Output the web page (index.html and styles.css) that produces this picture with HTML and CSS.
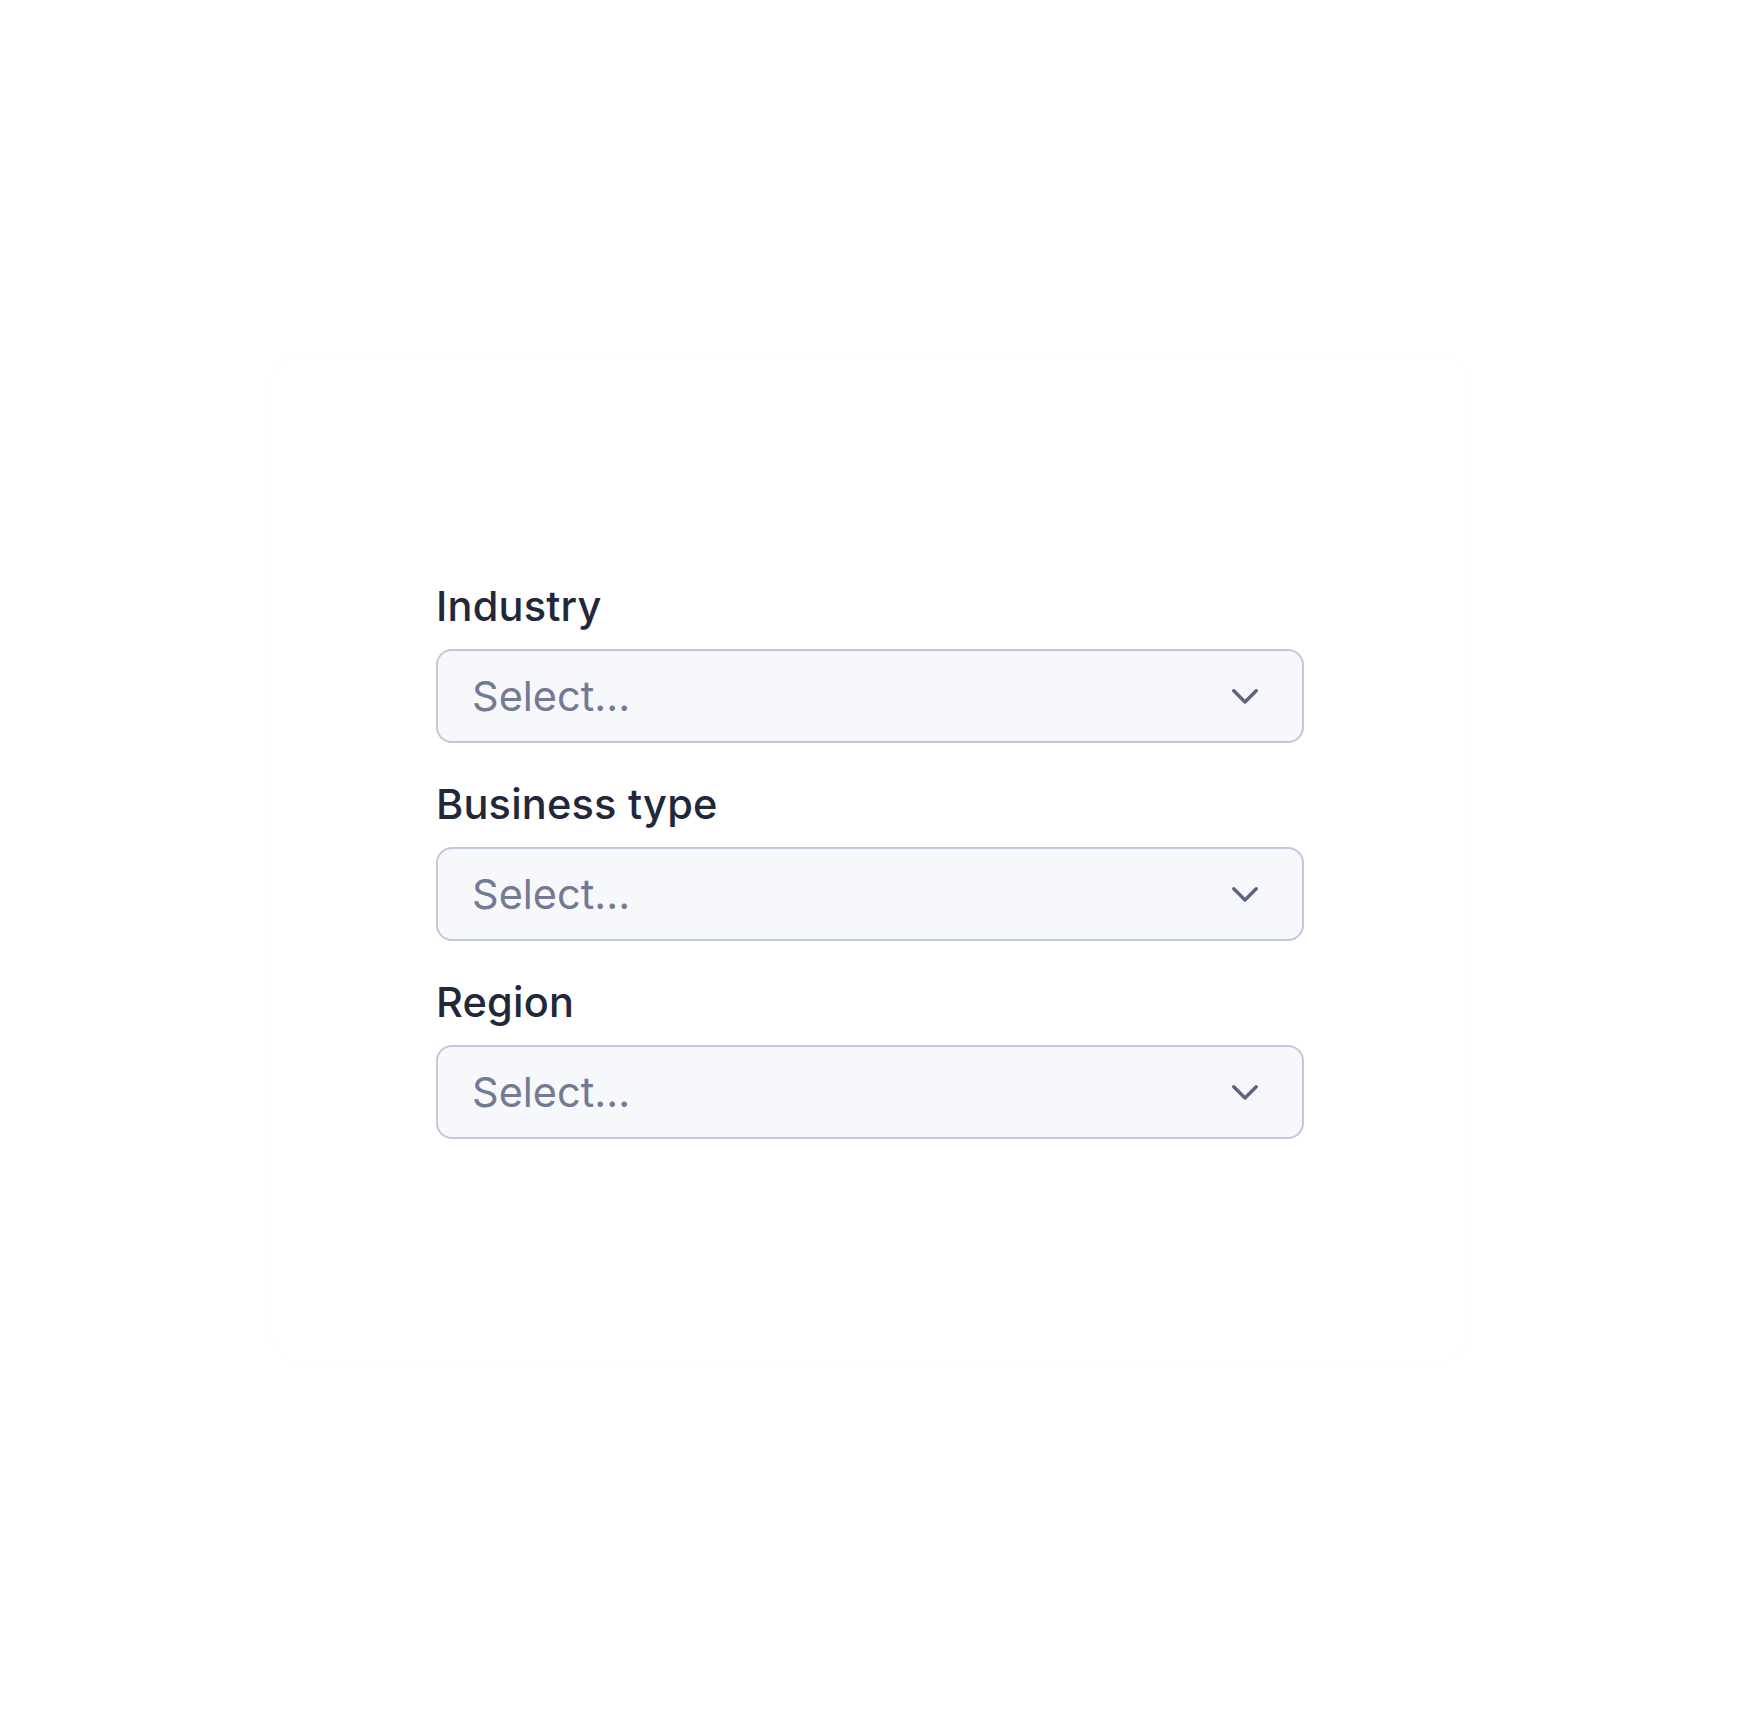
FILE: index.html
```html
<!DOCTYPE html>
<html lang="en">
<head>
    <meta charset="UTF-8">
    <meta name="viewport" content="width=device-width, initial-scale=1.0">
    <title>Company details</title>
    <link rel="stylesheet" href="styles.css">
</head>
<body>
    <div class="card">
        <div class="fields">
            <div class="field">
                <label class="field-label">Industry</label>
                <div class="select">
                    <span class="select-value">Select...</span>
                    <svg class="chevron" width="26" height="15" viewBox="0 0 26 15"><path d="M1.8 1.8 L13 13 L24.2 1.8"/></svg>
                </div>
            </div>
            <div class="field">
                <label class="field-label">Business type</label>
                <div class="select">
                    <span class="select-value">Select...</span>
                    <svg class="chevron" width="26" height="15" viewBox="0 0 26 15"><path d="M1.8 1.8 L13 13 L24.2 1.8"/></svg>
                </div>
            </div>
            <div class="field">
                <label class="field-label">Region</label>
                <div class="select">
                    <span class="select-value">Select...</span>
                    <svg class="chevron" width="26" height="15" viewBox="0 0 26 15"><path d="M1.8 1.8 L13 13 L24.2 1.8"/></svg>
                </div>
            </div>
        </div>
    </div>
</body>
</html>
```

FILE: styles.css
```css
html, body {
    margin: 0;
    height: 100%;
}
body {
    font-family: Inter, "Noto Sans", sans-serif;
    background: #ffffff;
    display: flex;
    align-items: center;
    justify-content: center;
}
.card {
    width: 1200px;
    height: 1010px;
    margin-top: -1px;
    box-sizing: border-box;
    border: 1px solid #fdfdfd;
    border-radius: 32px;
    display: flex;
    align-items: center;
    justify-content: center;
}
.fields {
    width: 868px;
    display: flex;
    flex-direction: column;
    gap: 31px;
}
.field-label {
    display: block;
    font-size: 41.5px;
    line-height: 60px;
    font-weight: 500;
    letter-spacing: 0.2px;
    color: #22273a;
    margin-bottom: 13px;
}
.select {
    height: 94px;
    box-sizing: border-box;
    border: 2px solid #c2c7dd;
    border-radius: 16px;
    background: #f7f8fc;
    padding: 0 44px 0 34px;
    display: flex;
    align-items: center;
    justify-content: space-between;
}
.select-value {
    font-size: 41.5px;
    color: #737a94;
}
.chevron {
    fill: none;
    stroke: #5e6480;
    stroke-width: 3.4;
    stroke-linecap: round;
    stroke-linejoin: round;
}
```
